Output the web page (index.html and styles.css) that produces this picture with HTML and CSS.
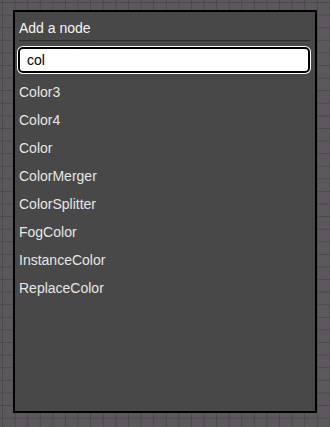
FILE: index.html
```html
<!DOCTYPE html>
<html lang="en">
<head>
  <meta charset="UTF-8">
  <meta name="viewport" content="width=device-width, initial-scale=1.0">
  <title>Add a node</title>
  <link rel="stylesheet" href="styles.css">
</head>
<body>
  <div class="node-picker">
    <div class="picker-title">Add a node</div>
    <input type="text" class="picker-search" value="col" />
    <ul class="picker-list">
      <li>Color3</li>
      <li>Color4</li>
      <li>Color</li>
      <li>ColorMerger</li>
      <li>ColorSplitter</li>
      <li>FogColor</li>
      <li>InstanceColor</li>
      <li>ReplaceColor</li>
    </ul>
  </div>
</body>
</html>
```

FILE: styles.css
```css
html, body {
  margin: 0;
  height: 100%;
}

body {
  font-family: 'Liberation Sans', Arial, sans-serif;
  background-color: #5c585d;
  background-image:
    linear-gradient(to right, #4c494d 1px, transparent 1px),
    linear-gradient(to bottom, #4c494d 1px, transparent 1px);
  background-size: 12.6px 12.6px;
  background-position: 2px 2px;
  padding-top: 10px;
  box-sizing: border-box;
}

.node-picker {
  margin-left: 13px;
  width: 304px;
  height: 403px;
  box-sizing: border-box;
  border: 2px solid #000;
  background: #484848;
  padding: 0 5px 0 4px;
}

.picker-title {
  font-size: 14px;
  line-height: 17px;
  color: #f4f4f4;
  padding: 8px 0 3px;
  border-bottom: 1px solid #2b2b2b;
}

.picker-search {
  display: block;
  width: calc(100% + 1px);
  height: 26px;
  margin: 6px 0 0 -1px;
  box-sizing: border-box;
  border: 2px solid #000;
  border-radius: 5px;
  box-shadow: 0 0 0 1px #fff;
  background: #fff;
  padding: 0 7px;
  font-family: inherit;
  font-size: 14px;
  color: #000;
  outline: none;
}

.picker-list {
  list-style: none;
  margin: 5px 0 0;
  padding: 0;
}

.picker-list li {
  font-size: 14px;
  line-height: 28px;
  color: #e6e6e6;
}
```
